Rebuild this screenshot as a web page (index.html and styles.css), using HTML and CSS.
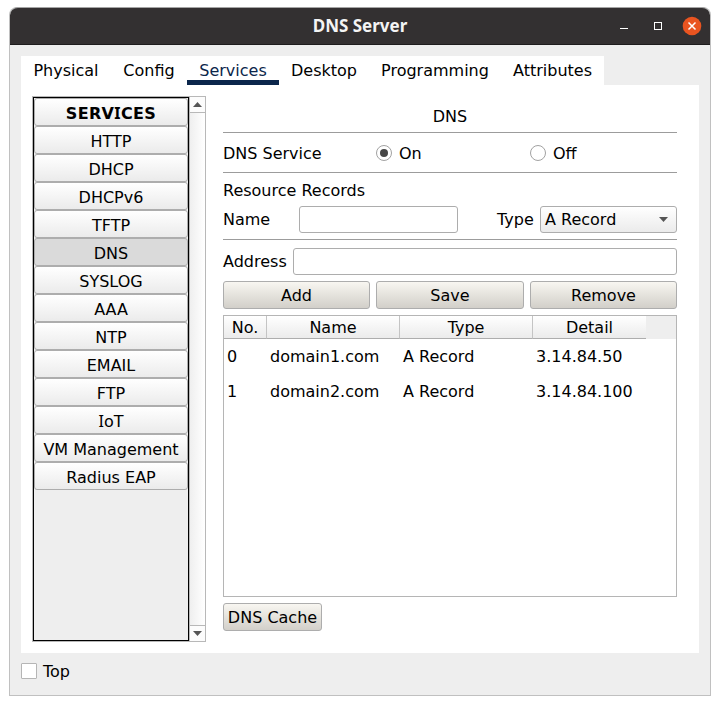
FILE: index.html
```html
<!DOCTYPE html>
<html lang="en">
<head>
<meta charset="utf-8">
<title>DNS Server</title>
<link rel="stylesheet" href="styles.css">
</head>
<body>
<div class="window">
  <header class="titlebar">
    <div class="title">DNS Server</div>
    <svg class="controls" width="90" height="20" viewBox="0 0 90 20">
      <path d="M8 12.5h8" stroke="#fff"/>
      <rect x="42.5" y="6.5" width="7" height="7" fill="none" stroke="#fff"/>
      <circle cx="80" cy="10" r="9.3" fill="#e95420"/>
      <path d="M76.5 6.5l7 7m0-7l-7 7" stroke="#fff" stroke-width="1.5"/>
    </svg>
  </header>
  <main class="content">
    <nav class="tabs">
      <div class="tab physical">Physical</div>
      <div class="tab config">Config</div>
      <div class="tab services active">Services</div>
      <div class="tab desktop">Desktop</div>
      <div class="tab programming">Programming</div>
      <div class="tab attributes">Attributes</div>
    </nav>
    <div class="panel">
      <aside class="sidebar">
        <div class="list">
          <div class="item heading">SERV<span class="cap-i">I</span>CES</div>
          <div class="item">HTTP</div>
          <div class="item">DHCP</div>
          <div class="item">DHCPv6</div>
          <div class="item">TFTP</div>
          <div class="item selected">DNS</div>
          <div class="item">SYSLOG</div>
          <div class="item">AAA</div>
          <div class="item">NTP</div>
          <div class="item">EMAIL</div>
          <div class="item">FTP</div>
          <div class="item"><span class="cap-i">I</span>oT</div>
          <div class="item">VM Management</div>
          <div class="item">Radius EAP</div>
        </div>
        <div class="scrollbar">
          <div class="arrow up"><svg width="9" height="5"><path d="M0 5L4.5 0L9 5z" fill="#555"/></svg></div>
          <div class="track"></div>
          <div class="arrow down"><svg width="9" height="5"><path d="M0 0L4.5 5L9 0z" fill="#555"/></svg></div>
        </div>
      </aside>
      <section class="form">
        <h1>DNS</h1>
        <div class="service-row">
          <span>DNS Service</span>
          <label><i class="radio checked"></i><span>On</span></label>
          <label><i class="radio"></i><span>Off</span></label>
        </div>
        <div class="records-title">Resource Records</div>
        <div class="name-row">
          <span class="name-label">Name</span>
          <div class="input name-input"></div>
          <span class="type-label">Type</span>
          <div class="select">A Record<svg width="9" height="5"><path d="M0 0h9L4.5 5z" fill="#555"/></svg></div>
        </div>
        <div class="address-row">
          <span>Address</span>
          <div class="input"></div>
        </div>
        <div class="buttons">
          <div class="button">Add</div>
          <div class="button">Save</div>
          <div class="button">Remove</div>
        </div>
        <div class="table">
          <div class="row head"><span>No.</span><span>Name</span><span>Type</span><span>Detail</span></div>
          <div class="row"><span>0</span><span>domain1.com</span><span>A Record</span><span>3.14.84.50</span></div>
          <div class="row"><span>1</span><span>domain2.com</span><span>A Record</span><span>3.14.84.100</span></div>
        </div>
        <div class="button cache">DNS Cache</div>
      </section>
    </div>
    <label class="top"><i class="checkbox"></i><span>Top</span></label>
  </main>
</div>
</body>
</html>
```
FILE: styles.css
```css
* { box-sizing: border-box; }
body {
  margin: 0;
  padding: 7px 9px 9px;
  background: #fff;
  color: #000;
  font: 16px/20px "DejaVu Sans", sans-serif;
}
svg { display: block; }
.window {
  width: 702px;
  height: 689px;
  border: 1px solid #c0c0c0;
  border-top: 0;
  border-radius: 8px 8px 0 0;
  background: #eee;
}
.titlebar {
  display: grid;
  grid-template-columns: 90px 1fr 90px;
  align-items: center;
  height: 38px;
  padding-right: 8px;
  border-top: 1px solid #a5a5a5;
  border-bottom: 1px solid #1e1c1d;
  border-radius: 8px 8px 0 0;
  background: #333031;
}
.title {
  grid-column: 2;
  text-align: center;
  padding-left: 8px;
  color: #f4f4f4;
  font: bold 17px/22px "Noto Sans", sans-serif;
}
.content { padding: 11px 11px 0; }
.tabs { display: flex; width: 583px; height: 29px; background: #fff; }
.tab {
  display: flex;
  flex: none;
  justify-content: center;
  height: 29px;
  padding-top: 5px;
}
.physical { width: 90px; }
.config { width: 76px; }
.services { width: 92px; }
.desktop { width: 90px; }
.programming { width: 132px; }
.attributes { width: 103px; }
.active { color: #0b264b; border-bottom: 5px solid #0b264b; }
.panel {
  display: flex;
  gap: 17px;
  width: 678px;
  height: 568px;
  padding: 11px;
  background: #fff;
}
.sidebar { display: flex; width: 174px; height: 546px; border: 1px solid #b8b8b8; }
.list { width: 156px; border: 1px solid #000; background: #eee; }
.item {
  height: 28px;
  border: 1px solid #adadad;
  border-radius: 3px;
  background: linear-gradient(#fff, #ebebeb);
  text-align: center;
  line-height: 29px;
}
.heading { font-weight: bold; letter-spacing: .35px; }
.cap-i { font-family: "Noto Sans", sans-serif; line-height: 1; }
.selected { background: #dadada; }
.scrollbar { display: flex; flex-direction: column; width: 16px; border-left: 1px solid #b8b8b8; }
.arrow { display: flex; align-items: center; padding-left: 3px; height: 16px; background: #fcfcfc; }
.up { border-bottom: 1px solid #b8b8b8; }
.down { border-top: 1px solid #b8b8b8; }
.track { flex: 1; background: linear-gradient(90deg, #efefef, #fff); }
.form { display: flex; flex-direction: column; width: 454px; }
h1 {
  height: 37px;
  margin: 0;
  padding-top: 11px;
  border-bottom: 1px solid #9c9c9c;
  font-size: 16px;
  font-weight: normal;
  line-height: 20px;
  text-align: center;
}
.service-row {
  display: grid;
  grid-template-columns: 153px 154px 1fr;
  align-items: center;
  height: 40px;
  border-bottom: 1px solid #9c9c9c;
}
.service-row span, .top span { padding-top: 2px; }
label { display: flex; align-items: center; }
.service-row > span { display: block; }
.radio {
  display: flex;
  width: 16px;
  height: 16px;
  margin-right: 7px;
  border: 1px solid #a2a2a2;
  border-radius: 50%;
  background: #fff;
}
.checked::after { content: ""; width: 8px; height: 8px; margin: 3px; border-radius: 50%; background: #464646; }
.records-title { height: 33px; padding-top: 8px; }
.name-row { display: flex; align-items: flex-start; height: 34px; border-bottom: 1px solid #9c9c9c; line-height: 27px; }
.name-label { width: 76px; }
.input { height: 27px; border: 1px solid #adadad; border-radius: 3px; background: #fff; }
.name-input { width: 159px; }
.type-label { width: 82px; padding-left: 39px; }
.select {
  display: flex;
  align-items: center;
  justify-content: space-between;
  width: 137px;
  height: 27px;
  padding: 0 8px 0 4px;
  border: 1px solid #adadad;
  border-radius: 3px;
  background: linear-gradient(#fff, #ebebeb);
}
.address-row { display: grid; grid-template-columns: 70px 1fr; height: 27px; margin-top: 8px; line-height: 27px; }
.buttons { display: grid; grid-template-columns: 147px 148px 147px; gap: 6px; margin-top: 6px; }
.button {
  height: 28px;
  border: 1px solid #adadad;
  border-radius: 3px;
  background: linear-gradient(#f8f6f1, #d2cfc9);
  line-height: 27px;
  text-align: center;
}
.table { height: 282px; margin-top: 6px; border: 1px solid #b5b5b5; }
.row { display: grid; grid-template-columns: 43px 133px 133px 113px; height: 35px; line-height: 35px; }
.row span { padding-left: 3px; }
.head { height: 23px; line-height: 23px; background: #eee; }
.head span {
  height: 23px;
  padding: 0;
  border-right: 1px solid #c4c4c4;
  border-bottom: 1px solid #adadad;
  background: linear-gradient(#fff, #ebebeb);
  text-align: center;
}
.head span:last-child { border-right: 0; }
.cache { width: 99px; margin-top: 6px; }
.top { height: 16px; margin-top: 10px; }
.checkbox { width: 16px; height: 16px; margin-right: 6px; border: 1px solid #b5b5b5; border-radius: 1px; background: #fff; }
```
